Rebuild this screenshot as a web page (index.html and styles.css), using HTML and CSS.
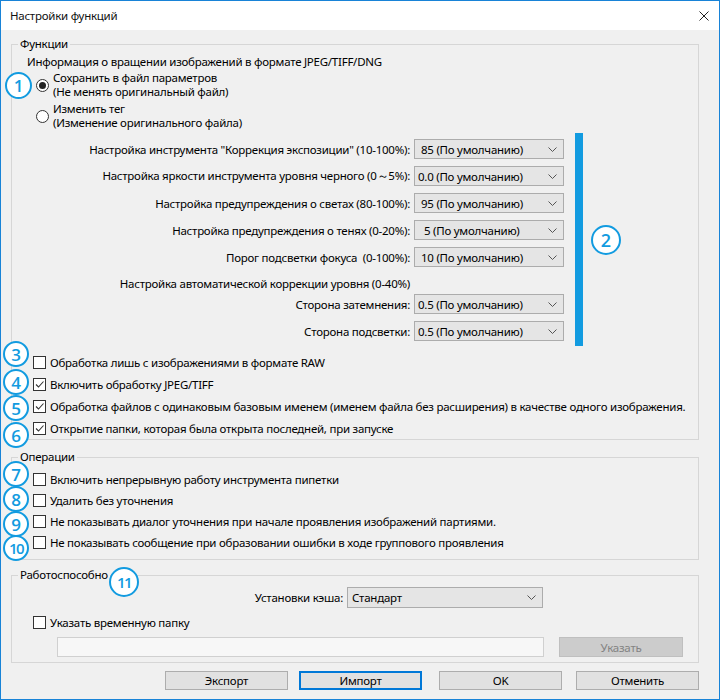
FILE: index.html
```html
<!DOCTYPE html>
<html lang="ru">
<head>
<meta charset="utf-8">
<title>Настройки функций</title>
<link rel="stylesheet" href="styles.css">
</head>
<body>
<div class="window">
  <div class="titlebar">
    <span class="title">Настройки функций</span>
    <svg class="close" viewBox="0 0 10 10" width="10" height="10"><path d="M0.5 0.5 L9.5 9.5 M9.5 0.5 L0.5 9.5" stroke="#222" stroke-width="1" fill="none"/></svg>
  </div>
  <div class="client">
    <fieldset class="group g-func">
      <legend>Функции</legend>
      <div class="info">Информация о вращении изображений в формате JPEG/TIFF/DNG</div>
      <div class="radio-row r1"><span class="radio checked"></span><span class="rtext">Сохранить в файл параметров<br>(Не менять оригинальный файл)</span></div>
      <div class="radio-row r2"><span class="radio"></span><span class="rtext">Изменить тег<br>(Изменение оригинального файла)</span></div>
      <div class="settings">
        <div class="srow"><span class="slabel">Настройка инструмента "Коррекция экспозиции" (10-100%):</span><div class="select pad7"><span>85 (По умолчанию)</span><svg class="chev" viewBox="0 0 9 5" width="9" height="5"><path d="M0.5 0.5 L4.5 4.5 L8.5 0.5" stroke="#555" fill="none"/></svg></div></div>
        <div class="srow"><span class="slabel">Настройка яркости инструмента уровня черного (0～5%):</span><div class="select"><span>0.0 (По умолчанию)</span><svg class="chev" viewBox="0 0 9 5" width="9" height="5"><path d="M0.5 0.5 L4.5 4.5 L8.5 0.5" stroke="#555" fill="none"/></svg></div></div>
        <div class="srow"><span class="slabel">Настройка предупреждения о светах (80-100%):</span><div class="select pad7"><span>95 (По умолчанию)</span><svg class="chev" viewBox="0 0 9 5" width="9" height="5"><path d="M0.5 0.5 L4.5 4.5 L8.5 0.5" stroke="#555" fill="none"/></svg></div></div>
        <div class="srow"><span class="slabel">Настройка предупреждения о тенях (0-20%):</span><div class="select pad10"><span>5 (По умолчанию)</span><svg class="chev" viewBox="0 0 9 5" width="9" height="5"><path d="M0.5 0.5 L4.5 4.5 L8.5 0.5" stroke="#555" fill="none"/></svg></div></div>
        <div class="srow"><span class="slabel">Порог подсветки фокуса&nbsp; (0-100%):</span><div class="select pad7"><span>10 (По умолчанию)</span><svg class="chev" viewBox="0 0 9 5" width="9" height="5"><path d="M0.5 0.5 L4.5 4.5 L8.5 0.5" stroke="#555" fill="none"/></svg></div></div>
        <div class="srow shead"><span class="slabel">Настройка автоматической коррекции уровня (0-40%)</span><span></span></div>
        <div class="srow tight"><span class="slabel">Сторона затемнения:</span><div class="select"><span>0.5 (По умолчанию)</span><svg class="chev" viewBox="0 0 9 5" width="9" height="5"><path d="M0.5 0.5 L4.5 4.5 L8.5 0.5" stroke="#555" fill="none"/></svg></div></div>
        <div class="srow"><span class="slabel">Сторона подсветки:</span><div class="select"><span>0.5 (По умолчанию)</span><svg class="chev" viewBox="0 0 9 5" width="9" height="5"><path d="M0.5 0.5 L4.5 4.5 L8.5 0.5" stroke="#555" fill="none"/></svg></div></div>
      </div>
      <div class="checks c22">
        <div class="check-row"><span class="box"></span><span>Обработка лишь с изображениями в формате RAW</span></div>
        <div class="check-row"><span class="box"><svg viewBox="0 0 11 11" width="11" height="11"><path d="M2 5.5 L4.5 8 L9.5 2.5" stroke="#333" stroke-width="1.1" fill="none"/></svg></span><span>Включить обработку JPEG/TIFF</span></div>
        <div class="check-row"><span class="box"><svg viewBox="0 0 11 11" width="11" height="11"><path d="M2 5.5 L4.5 8 L9.5 2.5" stroke="#333" stroke-width="1.1" fill="none"/></svg></span><span>Обработка файлов с одинаковым базовым именем (именем файла без расширения) в качестве одного изображения.</span></div>
        <div class="check-row"><span class="box"><svg viewBox="0 0 11 11" width="11" height="11"><path d="M2 5.5 L4.5 8 L9.5 2.5" stroke="#333" stroke-width="1.1" fill="none"/></svg></span><span>Открытие папки, которая была открыта последней, при запуске</span></div>
      </div>
    </fieldset>

    <fieldset class="group g-ops">
      <legend>Операции</legend>
      <div class="checks c21">
        <div class="check-row"><span class="box"></span><span>Включить непрерывную работу инструмента пипетки</span></div>
        <div class="check-row"><span class="box"></span><span>Удалить без уточнения</span></div>
        <div class="check-row"><span class="box"></span><span>Не показывать диалог уточнения при начале проявления изображений партиями.</span></div>
        <div class="check-row"><span class="box"></span><span>Не показывать сообщение при образовании ошибки в ходе группового проявления</span></div>
      </div>
    </fieldset>

    <fieldset class="group g-perf">
      <legend>Работоспособно</legend>
      <div class="cache-row"><span class="slabel">Установки кэша:</span><div class="select pad5"><span>Стандарт</span><svg class="chev" viewBox="0 0 9 5" width="9" height="5"><path d="M0.5 0.5 L4.5 4.5 L8.5 0.5" stroke="#555" fill="none"/></svg></div></div>
      <div class="check-row temp"><span class="box"></span><span>Указать временную папку</span></div>
      <div class="path-row"><div class="path-field"></div><div class="btn disabled">Указать</div></div>
    </fieldset>

    <div class="buttons">
      <div class="btn b-export">Экспорт</div>
      <div class="btn b-import">Импорт</div>
      <div class="btn b-ok">OK</div>
      <div class="btn b-cancel">Отменить</div>
    </div>
  </div>

  <div class="bar"></div>
  <div class="callout k1">1</div>
  <div class="callout big k2">2</div>
  <div class="callout k3">3</div>
  <div class="callout k4">4</div>
  <div class="callout k5">5</div>
  <div class="callout k6">6</div>
  <div class="callout k7">7</div>
  <div class="callout k8">8</div>
  <div class="callout k9">9</div>
  <div class="callout two k10">10</div>
  <div class="callout big two k11">11</div>
</div>
</body>
</html>
```
FILE: styles.css
```css
* { box-sizing: border-box; }
html, body { margin: 0; padding: 0; }
body {
  width: 720px;
  height: 700px;
  font-family: "Noto Sans", "Open Sans", sans-serif;
  font-size: 11.5px;
  letter-spacing: -0.25px;
  color: #000;
  background: #fff;
}
.window {
  position: relative;
  width: 720px;
  height: 700px;
  border: 1px solid #1883d7;
  background: #f0f0f0;
  overflow: hidden;
}
.titlebar {
  height: 29px;
  background: #fff;
  display: flex;
  align-items: center;
  justify-content: space-between;
  padding: 0 10px 0 9px;
}
.title { color: #111; }
.close { display: block; }

.client { padding: 0 0 0 10px; }

.group {
  margin: 0;
  padding: 0;
  width: 688px;
  border: 1px solid #d6d6d6;
  min-width: 0;
}
.group legend {
  margin-left: 6px;
  padding: 0 2px;
  line-height: 16px;
  white-space: nowrap;
}
.g-func { margin-top: 6px; }
.g-ops { margin-top: 9px; padding-bottom: 6px; }
.g-perf { margin-top: 7px; padding-bottom: 5px; }

.info {
  margin: 2px 0 0 15px;
  line-height: 16px;
}
.radio-row {
  display: flex;
  align-items: center;
  gap: 4px;
  margin-left: 24px;
  line-height: 14px;
}
.r1 { margin-top: 1px; }
.r2 { margin-top: 3px; }
.radio {
  width: 13px;
  height: 13px;
  border: 1px solid #333;
  border-radius: 50%;
  background: #fff;
  display: flex;
  align-items: center;
  justify-content: center;
  flex: none;
}
.radio.checked::after {
  content: "";
  width: 7px;
  height: 7px;
  border-radius: 50%;
  background: #222;
}

.settings {
  width: 552px;
  margin-top: 9px;
  display: flex;
  flex-direction: column;
  gap: 7px;
}
.srow {
  display: grid;
  grid-template-columns: 1fr 150px;
  column-gap: 4px;
  align-items: center;
  height: 20px;
}
.srow.shead { margin-top: -1px; }
.srow.tight { margin-top: -6px; }
.slabel { text-align: right; white-space: nowrap; }

.select {
  height: 20px;
  background: #e5e5e5;
  border: 1px solid #acacac;
  display: flex;
  align-items: center;
  justify-content: space-between;
  padding: 0 6px 0 3px;
  white-space: nowrap;
}
.select.pad5 { padding-left: 4px; }
.select.pad7 { padding-left: 6px; }
.select.pad10 { padding-left: 9px; }
.chev { display: block; flex: none; }

.checks { display: flex; flex-direction: column; margin-left: 21px; }
.g-func .checks { margin-top: 10px; }
.g-ops .checks { margin-top: 4px; }
.check-row {
  display: flex;
  align-items: center;
  gap: 4px;
  white-space: nowrap;
}
.c22 .check-row { height: 22px; }
.c21 .check-row { height: 21px; }
.box {
  width: 13px;
  height: 13px;
  border: 1px solid #333;
  background: #fff;
  flex: none;
  display: flex;
  align-items: center;
  justify-content: center;
}
.box svg { display: block; }

.cache-row {
  display: grid;
  grid-template-columns: 1fr 196px;
  column-gap: 4px;
  align-items: center;
  width: 531px;
  margin-top: 4px;
}
.cache-row .select { height: 21px; }
.check-row.temp { margin: 4px 0 0 21px; height: 20px; }
.path-row {
  display: flex;
  gap: 15px;
  margin: 5px 0 0 45px;
  height: 20px;
}
.path-field {
  width: 487px;
  height: 20px;
  background: #f7f7f7;
  border: 1px solid #d0d0d0;
}
.btn {
  width: 124px;
  height: 20px;
  background: #e1e1e1;
  border: 1px solid #adadad;
  display: flex;
  align-items: center;
  justify-content: center;
}
.btn.disabled {
  background: #cccccc;
  border-color: #bfbfbf;
  color: #838383;
}
.buttons {
  display: flex;
  margin-top: 8px;
  padding-left: 154px;
}
.buttons .btn { width: 123px; height: 19px; }
.b-import { margin-left: 11px; border: 2px solid #0078d7 !important; }
.b-ok { margin-left: 17px; }
.b-cancel { margin-left: 14px; }

.bar {
  position: absolute;
  left: 574px;
  top: 132px;
  width: 8px;
  height: 213px;
  background: #129be0;
}
.callout {
  position: absolute;
  width: 26px;
  height: 26px;
  border: 2.5px solid #129be0;
  border-radius: 50%;
  background: #fff;
  color: #129be0;
  font-family: "Open Sans", "Noto Sans", sans-serif;
  font-weight: 600;
  font-size: 17px;
  letter-spacing: 0;
  line-height: 1;
  display: flex;
  align-items: center;
  justify-content: center;
}
.callout.big { width: 30px; height: 30px; font-size: 18px; }
.callout.two { font-size: 15px; letter-spacing: -1.5px; }
.k1 { left: 4px; top: 71px; width: 27px; height: 27px; }
.k2 { left: 590px; top: 224px; }
.k3 { left: 2px; top: 340px; }
.k4 { left: 2px; top: 368px; }
.k5 { left: 2px; top: 394px; }
.k6 { left: 2px; top: 421px; }
.k7 { left: 2px; top: 460px; }
.k8 { left: 2px; top: 485px; }
.k9 { left: 2px; top: 510px; }
.k10 { left: 2px; top: 534px; }
.k11 { left: 108px; top: 566px; }
```
